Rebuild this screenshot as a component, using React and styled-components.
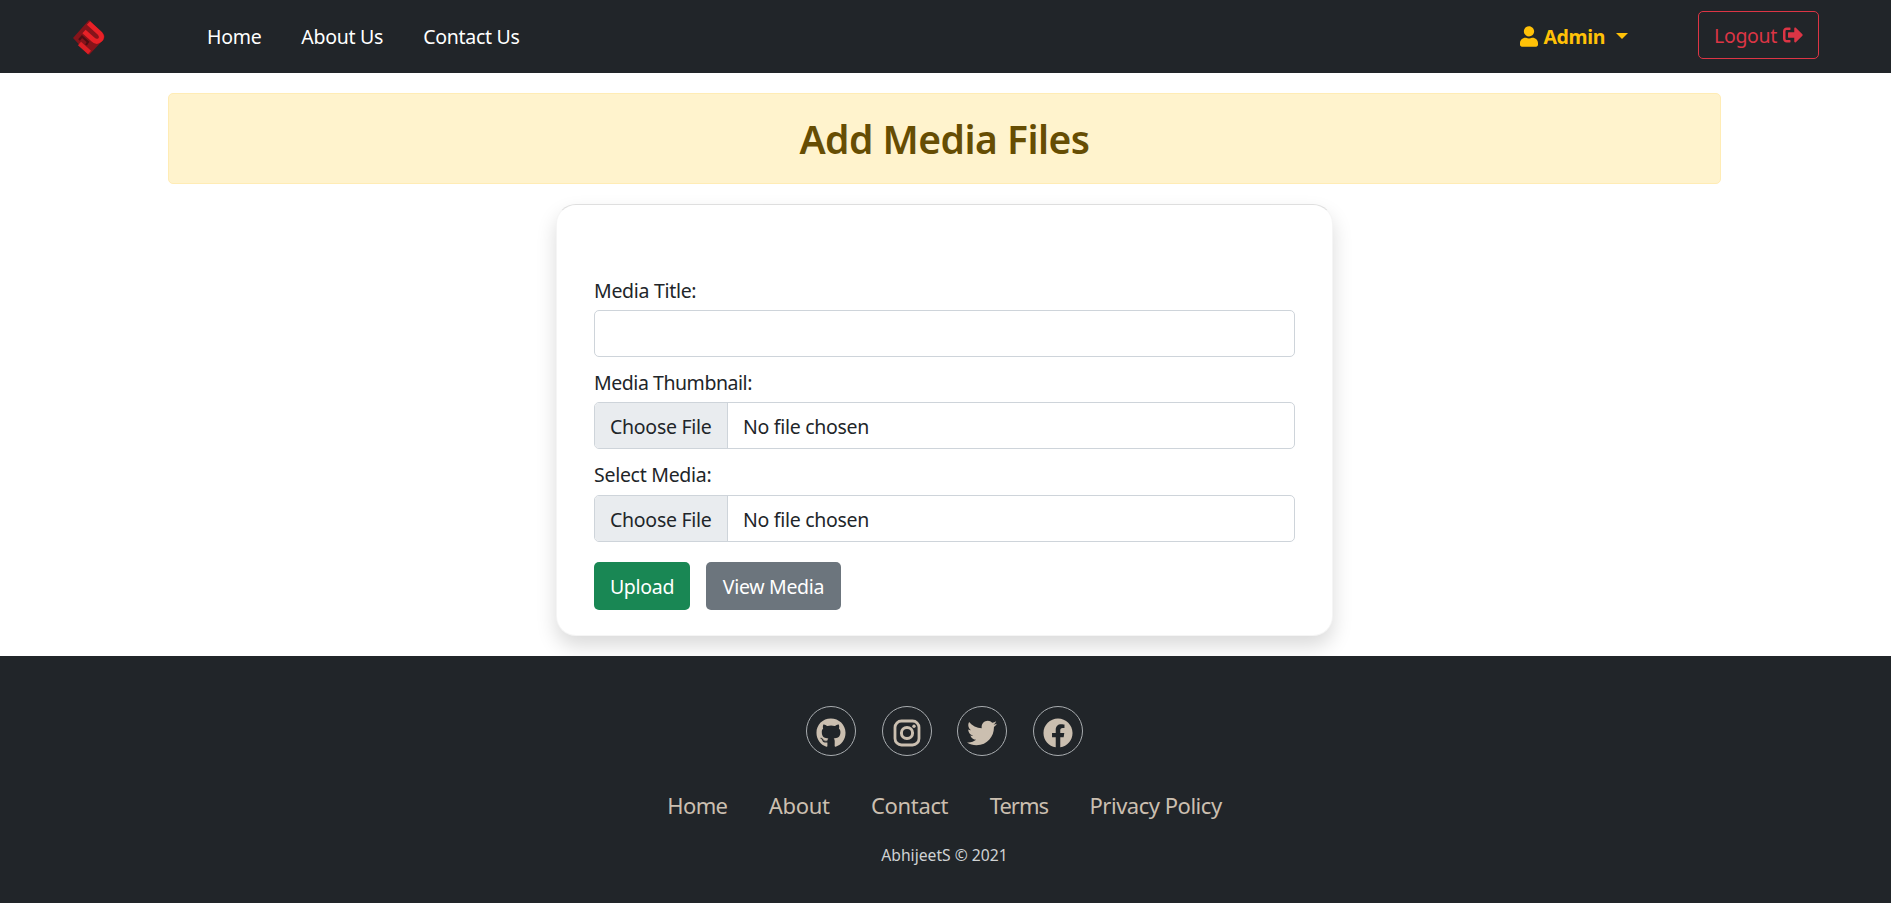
import React from "react";
import styled, { createGlobalStyle } from "styled-components";
import { FaUser, FaSignOutAlt, FaGithub, FaTwitter, FaFacebook } from "react-icons/fa";

const GlobalStyle = createGlobalStyle`
  *, *::before, *::after { box-sizing: border-box; }
  body {
    margin: 0;
    background: #fff;
    color: #212529;
    font-family: "Noto Sans", "Open Sans", sans-serif;
    font-size: 19.5px;
    line-height: 30px;
    overflow: hidden;
  }
`;

const Page = styled.div`
  display: flex;
  flex-direction: column;
  height: 903px;
`;

const Navbar = styled.nav`
  flex: none;
  display: flex;
  align-items: center;
  height: 73px;
  padding: 0 72px 0 71px;
  background: #212529;
`;

const Logo = styled.svg`
  width: 36px;
  height: 38px;
  margin: 2px 100px 0 0;
`;

const NavLinks = styled.div`
  display: flex;
  flex: 1;
  gap: 40px;
`;

const Text = styled.span`
  display: inline-block;
  white-space: nowrap;
  letter-spacing: ${(p) => p.$track || 0}px;
`;

const NavLink = styled.a`
  color: #fff;
  letter-spacing: -0.28px;
`;

const UserMenu = styled.div`
  display: flex;
  align-items: center;
  margin-right: 70px;
  color: #ffc107;
  font-weight: 700;

  svg {
    width: 18px;
    height: 21px;
    margin-right: 5px;
  }
`;

const Caret = styled.span`
  margin: -2px 0 0 11px;
  border-top: 6px solid currentColor;
  border-left: 6px solid transparent;
  border-right: 6px solid transparent;
`;

const LogoutButton = styled.button`
  display: flex;
  align-items: center;
  gap: 6px;
  width: 121px;
  height: 48px;
  margin-top: -3px;
  padding: 1px 0 0 15px;
  border: 1px solid #dc3545;
  border-radius: 5px;
  background: transparent;
  color: #dc3545;
  font: inherit;

  svg {
    width: 20px;
    height: 20px;
    margin-top: -1px;
  }
`;

const Alert = styled.header`
  flex: none;
  display: flex;
  align-items: center;
  justify-content: center;
  width: 1553px;
  height: 91px;
  margin: 20px 0 20px 168px;
  border: 1px solid #ffecb5;
  border-radius: 5px;
  background: #fff3cd;
`;

const Title = styled.h1`
  margin: 0;
  color: #664d03;
  font-size: 39px;
  font-weight: 600;
  line-height: 48px;
  letter-spacing: -0.5px;
`;

const Card = styled.form`
  flex: none;
  width: 777px;
  height: 432px;
  margin: 0 0 20px 556px;
  padding: 71px 37px 0;
  border: 1px solid rgba(0, 0, 0, 0.04);
  border-top-color: rgba(0, 0, 0, 0.125);
  border-radius: 20px;
  background: #fff;
  box-shadow: 0 10px 20px rgba(0, 0, 0, 0.15);
`;

const Field = styled.div`
  margin-bottom: 11px;
`;

const Label = styled.label`
  display: block;
  height: 34.2px;
  line-height: 30px;
  letter-spacing: ${(p) => p.$track || 0}px;
`;

const Control = styled.div`
  display: flex;
  height: 47px;
  border: 1px solid #ced4da;
  border-radius: 5px;
  background: #fff;
  overflow: hidden;
  line-height: 47px;
`;

const FileButton = styled.span`
  width: 133px;
  padding-left: 15px;
  border-right: 1px solid #ced4da;
  background: #e9ecef;
`;

const FileName = styled.span`
  padding-left: 15px;
`;

const Actions = styled.div`
  display: flex;
  gap: 16px;
  margin-top: 20px;
`;

const Button = styled.button`
  width: ${(p) => p.$width}px;
  height: 48px;
  padding: 2px 0 0;
  border: 0;
  border-radius: 5px;
  background: ${(p) => p.$color};
  color: #fff;
  font: inherit;
  letter-spacing: -0.3px;
`;

const Footer = styled.footer`
  flex: 1;
  display: flex;
  flex-direction: column;
  align-items: center;
  padding: 50px 2px 0 0;
  background: #212529;
  color: #cbbfb0;
`;

const Socials = styled.div`
  display: flex;
  gap: 25.5px;
`;

const SocialLink = styled.a`
  display: flex;
  align-items: center;
  justify-content: center;
  width: 50px;
  height: 50px;
  padding-top: 3px;
  border: 1px solid #a9adb0;
  border-radius: 50%;

  svg {
    width: 30px;
    height: 30px;
  }
`;

const FooterLinks = styled.div`
  display: flex;
  gap: 41.5px;
  margin-top: 32px;
  font-size: 22px;
  line-height: 34px;
`;

const Copyright = styled.p`
  margin: 21px 0 0;
  color: #cfd2d4;
  font-size: 15.7px;
  line-height: 24px;
`;

function InstagramIcon() {
  return (
    <svg viewBox="0 0 30 30" fill="none" stroke="currentColor">
      <rect x="3" y="3" width="24" height="24" rx="6.5" strokeWidth="2.8" />
      <circle cx="15" cy="15" r="5.6" strokeWidth="3" />
      <circle cx="22" cy="8.2" r="1.7" fill="currentColor" stroke="none" />
    </svg>
  );
}

function FileField({ label, track }) {
  return (
    <Field>
      <Label $track={track}>{label}</Label>
      <Control>
        <FileButton><Text $track={-0.27}>Choose File</Text></FileButton>
        <FileName><Text $track={-0.3}>No file chosen</Text></FileName>
      </Control>
    </Field>
  );
}

export default function App() {
  return (
    <Page>
      <GlobalStyle />
      <Navbar>
        <Logo viewBox="0 0 36 38" fill="none">
          <path d="M18 1 L32 14 Q35 18 32 21 L18 36 L2 19 Z" fill="#86141a" />
          <path d="M17.5 4 L29 14.5 Q32 18.5 29 21 Q25.5 24 22 20.5 L13 12.5" stroke="#e82127" strokeWidth="4.8" />
          <path d="M8 21 L11 17.5 L17 23 L15 26" stroke="#4d0e12" strokeWidth="2.2" />
          <path d="M8.5 24.5 L18.5 33.5" stroke="#dc1f25" strokeWidth="4.6" />
        </Logo>
        <NavLinks>
          <NavLink>Home</NavLink>
          <NavLink>About Us</NavLink>
          <NavLink>Contact Us</NavLink>
        </NavLinks>
        <UserMenu>
          <FaUser />
          <Text $track={-0.35}>Admin</Text>
          <Caret />
        </UserMenu>
        <LogoutButton>
          <Text $track={-0.3}>Logout</Text>
          <FaSignOutAlt />
        </LogoutButton>
      </Navbar>
      <Alert>
        <Title>Add Media Files</Title>
      </Alert>
      <Card>
        <Field>
          <Label $track={-0.3}>Media Title:</Label>
          <Control />
        </Field>
        <FileField label="Media Thumbnail:" track={-0.45} />
        <FileField label="Select Media:" track={-0.28} />
        <Actions>
          <Button type="button" $width={96} $color="#198754">Upload</Button>
          <Button type="button" $width={135} $color="#6c757d">View Media</Button>
        </Actions>
      </Card>
      <Footer>
        <Socials>
          <SocialLink><FaGithub /></SocialLink>
          <SocialLink><InstagramIcon /></SocialLink>
          <SocialLink><FaTwitter /></SocialLink>
          <SocialLink><FaFacebook /></SocialLink>
        </Socials>
        <FooterLinks>
          <Text $track={-0.65}>Home</Text>
          <Text $track={-0.35}>About</Text>
          <Text $track={-0.35}>Contact</Text>
          <Text $track={-1}>Terms</Text>
          <Text $track={-0.48}>Privacy Policy</Text>
        </FooterLinks>
        <Copyright>AbhijeetS © 2021</Copyright>
      </Footer>
    </Page>
  );
}
